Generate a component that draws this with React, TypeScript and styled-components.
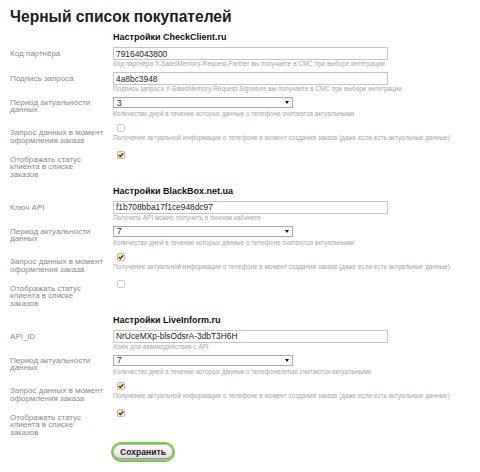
import React from 'react';
import styled, {createGlobalStyle} from 'styled-components';

type RowKind = 'input' | 'select' | 'check';

interface FieldRow {
  label: string;
  kind: RowKind;
  value?: string;
  checked?: boolean;
  hint?: string;
}

interface Section {
  title: string;
  rows: FieldRow[];
}

const periodLabel = 'Период актуальности\nданных';
const requestLabel = 'Запрос данных в момент\nоформления заказа';
const statusLabel = 'Отображать статус\nклиента в списке\nзаказов';
const periodHint = 'Количество дней в течение которых данные о телефоне считаются актуальными';
const requestHint = 'Получение актуальной информации о телефоне в момент создания заказа (даже если есть актуальные данные)';

const sections: Section[] = [
  {
    title: 'Настройки CheckClient.ru',
    rows: [
      {
        label: 'Код партнёра',
        kind: 'input',
        value: '79164043800',
        hint: 'Код партнёра X-SalesMemory-Request-Partner вы получаете в СМС при выборе интеграции',
      },
      {
        label: 'Подпись запроса',
        kind: 'input',
        value: '4a8bc3948',
        hint: 'Подпись запроса X-SalesMemory-Request-Signature вы получаете в СМС при выборе интеграции',
      },
      {label: periodLabel, kind: 'select', value: '3', hint: periodHint},
      {label: requestLabel, kind: 'check', checked: false, hint: requestHint},
      {label: statusLabel, kind: 'check', checked: true},
    ],
  },
  {
    title: 'Настройки BlackBox.net.ua',
    rows: [
      {
        label: 'Ключ API',
        kind: 'input',
        value: 'f1b708bba17f1ce948dc97',
        hint: 'Получить API можно получить в личном кабинете',
      },
      {label: periodLabel, kind: 'select', value: '7', hint: periodHint},
      {label: requestLabel, kind: 'check', checked: true, hint: requestHint},
      {label: statusLabel, kind: 'check', checked: false},
    ],
  },
  {
    title: 'Настройки LiveInform.ru',
    rows: [
      {
        label: 'API_ID',
        kind: 'input',
        value: 'NrUceMXp-blsOdsrA-3dbT3H6H',
        hint: 'Ключ для взаимодействия с API',
      },
      {
        label: periodLabel,
        kind: 'select',
        value: '7',
        hint: 'Количество дней в течение которых данные о телефоне/email считаются актуальными',
      },
      {label: requestLabel, kind: 'check', checked: true, hint: requestHint},
      {label: statusLabel, kind: 'check', checked: true},
    ],
  },
];

const labelOffset: Record<RowKind, number> = {input: 2.6, select: 1.6, check: 7};

const GlobalStyle = createGlobalStyle`
  body {
    margin: 0;
    background: #fff;
    font-family: "Liberation Sans", Arial, sans-serif;
  }
`;

const Page = styled.div`
  padding: 8px 10px 0;
`;

const Title = styled.h1`
  margin: 0 0 -1px;
  font-size: 15.6px;
  line-height: 18px;
  font-weight: bold;
  color: #1c1c1c;
`;

const SectionTitle = styled.h2`
  margin: 7px 0 4px 103px;
  font-size: 9px;
  line-height: 11px;
  font-weight: bold;
  color: #111;
`;

const Row = styled.div`
  display: flex;
  align-items: flex-start;
  margin-bottom: 4px;
`;

const Label = styled.div<{$offset: number}>`
  flex: 0 0 103px;
  box-sizing: border-box;
  padding: ${p => p.$offset}px 4px 0 0;
  font-size: 8px;
  line-height: 7.8px;
  color: #8a8a8a;
  white-space: pre-line;
`;

const Field = styled.div`
  display: flex;
  flex-direction: column;
  align-items: flex-start;
`;

const TextInput = styled.input`
  box-sizing: border-box;
  width: 275px;
  height: 13px;
  margin: 0;
  padding: 0 2px;
  border: 1px solid #c6c6c6;
  border-radius: 0;
  font-family: "Liberation Sans", Arial, sans-serif;
  font-size: 8.4px;
  color: #1e1e1e;
  outline: none;
`;

const Select = styled.div`
  box-sizing: border-box;
  width: 180px;
  height: 11px;
  margin-bottom: 2px;
  padding: 0 3px;
  display: flex;
  align-items: center;
  justify-content: space-between;
  border: 1px solid #aaa;
  font-size: 8.4px;
  color: #1e1e1e;
`;

const Arrow = styled.span`
  width: 0;
  height: 0;
  border-left: 2px solid transparent;
  border-right: 2px solid transparent;
  border-top: 3px solid #111;
`;

const Check = styled.span<{$checked: boolean}>`
  box-sizing: border-box;
  width: 8px;
  height: 8px;
  margin: 2px 0 2px 4px;
  display: flex;
  align-items: center;
  justify-content: center;
  border: 1px solid ${p => (p.$checked ? '#c7b68e' : '#c9c9c9')};
  border-radius: 1.5px;
  background: ${p => (p.$checked ? '#f4e4bd' : '#fff')};
`;

const Hint = styled.div`
  font-size: 6.4px;
  line-height: 8px;
  color: #a6a6a6;
  white-space: nowrap;
`;

const Actions = styled.div`
  padding-left: 101px;
`;

const SaveButton = styled.button`
  box-sizing: border-box;
  width: 64px;
  height: 20px;
  padding: 0;
  border: 2px solid #74cd3f;
  border-radius: 10px;
  background: linear-gradient(#ffffff, #dedede);
  box-shadow: inset 0 0 0 1px #b9b9b9, inset 0 -2px 0 #9a9a9a;
  font-family: "Liberation Sans", Arial, sans-serif;
  font-size: 8.6px;
  font-weight: bold;
  color: #222;
`;

const CheckMark = () => (
  <svg width="6" height="6" viewBox="0 0 6 6">
    <path d="M0.9 3.2 L2.3 4.6 L5.1 1.3" fill="none" stroke="#222" strokeWidth="1.2" />
  </svg>
);

const Control: React.FC<{row: FieldRow}> = ({row}) => {
  if (row.kind === 'input') {
    return <TextInput defaultValue={row.value} readOnly />;
  }
  if (row.kind === 'select') {
    return (
      <Select>
        <span>{row.value}</span>
        <Arrow />
      </Select>
    );
  }
  return <Check $checked={!!row.checked}>{row.checked && <CheckMark />}</Check>;
};

export default function App() {
  return (
    <Page>
      <GlobalStyle />
      <Title>Черный список покупателей</Title>
      {sections.map(section => (
        <div key={section.title}>
          <SectionTitle>{section.title}</SectionTitle>
          {section.rows.map((row, i) => (
            <Row key={i}>
              <Label $offset={labelOffset[row.kind]}>{row.label}</Label>
              <Field>
                <Control row={row} />
                {row.hint && <Hint>{row.hint}</Hint>}
              </Field>
            </Row>
          ))}
        </div>
      ))}
      <Actions>
        <SaveButton type="button">Сохранить</SaveButton>
      </Actions>
    </Page>
  );
}
